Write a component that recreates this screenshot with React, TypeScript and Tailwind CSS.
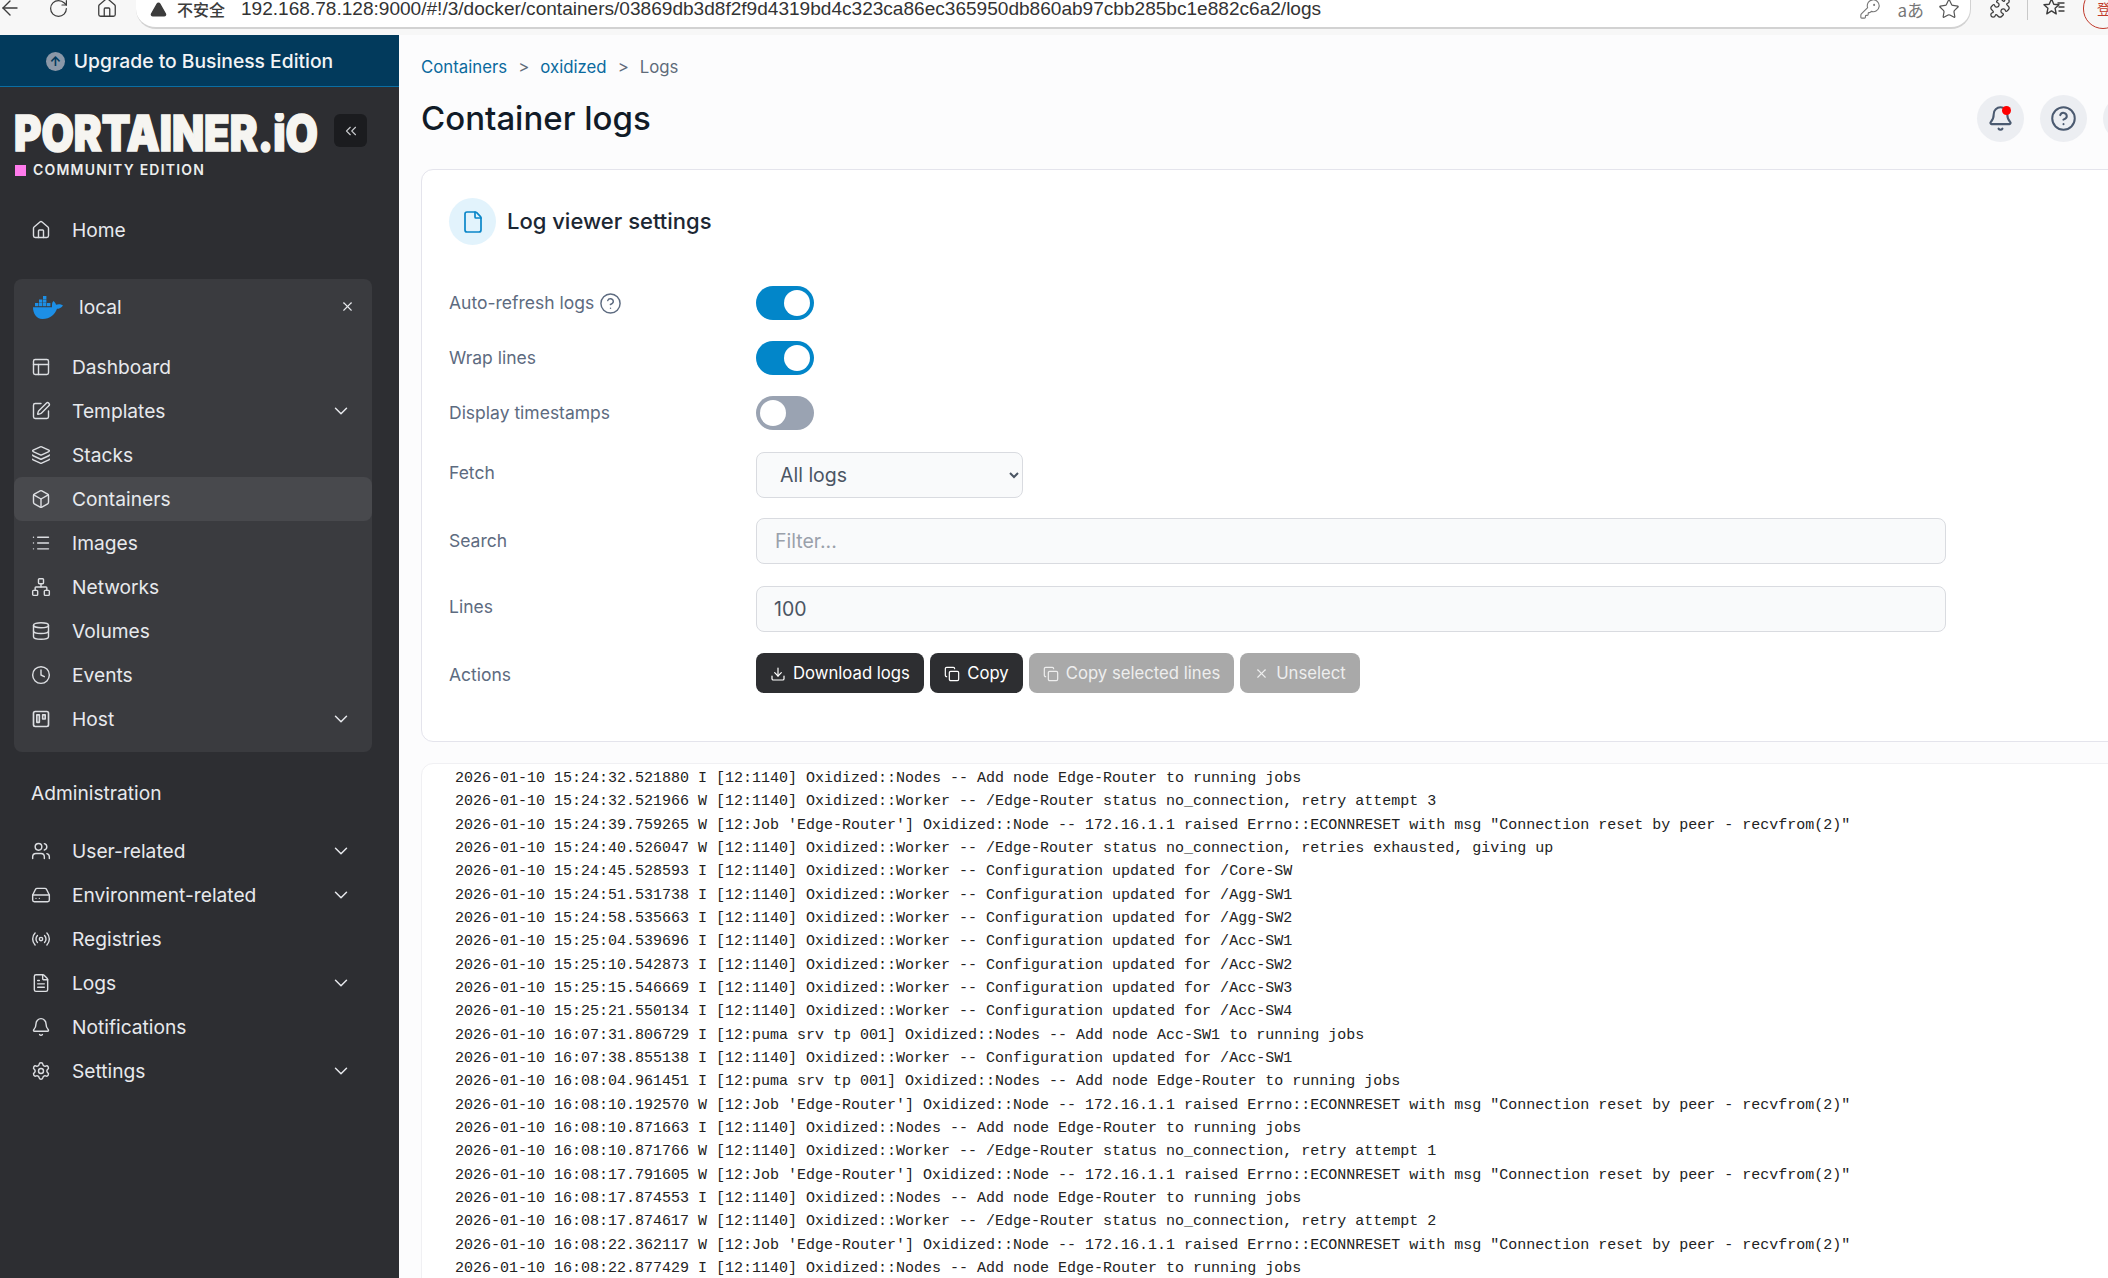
import type { ReactNode } from 'react';
import {
  ArrowLeft, Bell, Box, ChevronDown, ChevronsLeft, CircleHelp, Clock, Copy, Database, Download, File, FileText,
  HardDrive, House, KeyRound, Layers, List, Network, PanelsTopLeft, Puzzle, Radio, RotateCw, Settings, SquarePen,
  Star, TriangleAlert, Users, X,
} from 'lucide-react';

const inter = 'font-[Inter,sans-serif]';

function HostIcon() {
  return (
    <svg width="20" height="20" viewBox="0 0 24 24" fill="none" stroke="currentColor" strokeWidth="2" strokeLinecap="round" strokeLinejoin="round">
      <rect x="3" y="3" width="18" height="18" rx="2" />
      <rect x="7" y="7" width="3" height="9" />
      <rect x="14" y="7" width="3" height="5" />
    </svg>
  );
}

function DockerIcon() {
  return (
    <svg width="30" height="23" viewBox="0 0 30 23" fill="#1d8fe6" className="shrink-0">
      <rect x="2" y="7" width="3.4" height="3.2" />
      <rect x="6" y="7" width="3.4" height="3.2" />
      <rect x="10" y="7" width="3.4" height="3.2" />
      <rect x="14" y="7" width="3.4" height="3.2" />
      <rect x="6" y="3.5" width="3.4" height="3.2" />
      <rect x="10" y="3.5" width="3.4" height="3.2" />
      <rect x="10" y="0" width="3.4" height="3.2" />
      <path d="M0 11.2H19C19 9 18.7 6.5 20.5 5C22 6.2 22.8 7.6 23 8.8C25 7.8 28 8 30 9.5C28.6 12 26 12.8 24 12.8C22 18.5 17 23 9.5 23C3 23 0 17 0 11.2Z" />
    </svg>
  );
}

function FavoritesIcon() {
  return (
    <svg width="24" height="24" viewBox="0 0 24 24" fill="none" stroke="currentColor" strokeWidth="1.4" strokeLinejoin="round" strokeLinecap="round">
      <path d="M9.5 3l2.3 5.2 5.2.5-3.9 3.6 1.1 5.5-4.7-2.9-4.7 2.9 1.1-5.5L2 8.7l5.2-.5z" />
      <path d="M16 7h6M17 11h5M17 15h5" />
    </svg>
  );
}

function NavRow({ icon, label, chevron, active }: { icon: ReactNode; label: string; chevron?: boolean; active?: boolean }) {
  return (
    <div className={`mx-[14px] flex h-11 w-[358px] items-center rounded-lg pl-[17px] text-[#e7e9ed] ${active ? 'bg-[#48494d]' : ''}`}>
      <span className="flex w-5 shrink-0 justify-center text-[#dcdee2]">{icon}</span>
      <span className="ml-[21px] text-[19.2px]">{label}</span>
      {chevron && <ChevronDown size={22} strokeWidth={1.6} className="ml-auto mr-5" />}
    </div>
  );
}

function Sidebar() {
  const i = { size: 20, strokeWidth: 1.7 };
  return (
    <aside className="flex w-[399px] shrink-0 flex-col bg-[#2d2e32]">
      <div className="flex h-[52px] items-center justify-center gap-[9px] border-b border-[#0b6ea3] bg-[#023a5c] pr-[20px] pt-px text-[19.3px] font-medium text-[#f2f4f6]">
        <span className="flex h-[19px] w-[19px] items-center justify-center rounded-full bg-[#8b98a8] text-[13px] font-bold leading-none text-[#023a5c]">↑</span>
        Upgrade to Business Edition
      </div>
      <div className="flex items-start pl-[14px] pt-[26px]">
        <div>
          <svg width="304" height="40" viewBox="0 0 304 40" className="block">
            <text x="0" y="38" textLength="304" lengthAdjust="spacingAndGlyphs" fontFamily="Inter, sans-serif" fontWeight="900" fontSize="50" fill="#f6f5f1" stroke="#f6f5f1" strokeWidth="1.6">
              PORTAINER.iO
            </text>
          </svg>
          <div className="mt-[9px] flex items-center gap-[7px] pl-px">
            <span className="h-[11px] w-[11px] bg-[#ff7bec]" />
            <span className="text-[14px] font-semibold leading-[16px] tracking-[1.2px] text-[#eceded]">COMMUNITY EDITION</span>
          </div>
        </div>
        <div className="ml-[16px] mt-px flex h-[33px] w-[33px] items-center justify-center rounded-md bg-[#1b1c1f] text-[#c8cacd]">
          <ChevronsLeft size={18} strokeWidth={1.5} />
        </div>
      </div>
      <div className="mt-[30px]">
        <NavRow icon={<House {...i} />} label="Home" />
      </div>
      <div className="mx-[14px] mt-[27px] w-[358px] rounded-lg bg-[#3a3b3f] pb-[11px]">
        <div className="flex h-[66px] items-start pl-[19px] pt-[14px] text-[#e7e9ed]">
          <span className="mt-[3px]"><DockerIcon /></span>
          <span className="ml-[16px] text-[19.2px]">local</span>
          <X size={15} strokeWidth={1.8} className="ml-auto mr-[17px] mt-[6px]" />
        </div>
        <div className="-mx-[14px]">
          <NavRow icon={<PanelsTopLeft {...i} />} label="Dashboard" />
          <NavRow icon={<SquarePen {...i} />} label="Templates" chevron />
          <NavRow icon={<Layers {...i} />} label="Stacks" />
          <NavRow icon={<Box {...i} />} label="Containers" active />
          <NavRow icon={<List {...i} />} label="Images" />
          <NavRow icon={<Network {...i} />} label="Networks" />
          <NavRow icon={<Database {...i} />} label="Volumes" />
          <NavRow icon={<Clock {...i} />} label="Events" />
          <NavRow icon={<HostIcon />} label="Host" chevron />
        </div>
      </div>
      <div className="pl-[31px] pt-[28px] text-[19.2px] leading-[26px] text-[#e7e9ed]">Administration</div>
      <div className="mt-[23px]">
        <NavRow icon={<Users {...i} />} label="User-related" chevron />
        <NavRow icon={<HardDrive {...i} />} label="Environment-related" chevron />
        <NavRow icon={<Radio {...i} />} label="Registries" />
        <NavRow icon={<FileText {...i} />} label="Logs" chevron />
        <NavRow icon={<Bell {...i} />} label="Notifications" />
        <NavRow icon={<Settings {...i} />} label="Settings" chevron />
      </div>
    </aside>
  );
}

function BrowserBar() {
  return (
    <div className="h-[35px] shrink-0 overflow-hidden bg-[#f7f7f7]">
      <div className="-mt-[6px] flex h-[35px] items-stretch text-[#3c3c3c]">
        <div className="flex w-[136px] shrink-0 items-center pb-[7px]">
          <ArrowLeft size={24} strokeWidth={1.4} className="-ml-[2px]" />
          <RotateCw size={21} strokeWidth={1.4} className="ml-[26px]" />
          <House size={22} strokeWidth={1.4} className="ml-[27px]" />
        </div>
        <div className="flex w-[1835px] shrink-0 items-center rounded-b-[20px] border-b-2 border-r border-[#d2d2d2] bg-white pb-[3px] pl-[14px] pr-[10px]">
          <TriangleAlert size={17} strokeWidth={2} className="fill-[#3c3c3c] text-[#3c3c3c]" />
          <span className="ml-[10px] font-['Noto_Sans_CJK_SC',sans-serif] text-[16px] font-medium leading-none">不安全</span>
          <span className="ml-[16px] font-['Liberation_Sans',sans-serif] text-[19.07px] leading-none text-[#333]">
            192.168.78.128:9000/#!/3/docker/containers/03869db3d8f2f9d4319bd4c323ca86ec365950db860ab97cbb285bc1e882c6a2/logs
          </span>
          <KeyRound size={22} strokeWidth={1.2} className="ml-auto text-[#777]" />
          <span className="ml-[16px] font-['Noto_Sans_CJK_SC',sans-serif] text-[17px] leading-none text-[#777]">aあ</span>
          <Star size={22} strokeWidth={1.3} className="ml-[14px] text-[#555]" />
        </div>
        <div className="flex flex-1 items-center pb-[7px]">
          <Puzzle size={22} strokeWidth={1.4} className="ml-[18px]" />
          <span className="ml-[16px] h-[24px] w-px bg-[#c9c9c9]" />
          <span className="ml-[14px]"><FavoritesIcon /></span>
          <span className="ml-[17px] h-[41px] w-[40px] shrink-0 rounded-full border border-[#c0392b] pl-[13px] pt-[12px] font-['Noto_Sans_CJK_SC',sans-serif] text-[14px] leading-none text-[#c0392b]">登</span>
        </div>
      </div>
    </div>
  );
}

function Toggle({ on }: { on?: boolean }) {
  return (
    <div className={`flex h-[34px] w-[58px] items-center rounded-full px-[4px] ${on ? 'justify-end bg-[#0286c9]' : 'justify-start bg-[#9aa3b2]'}`}>
      <span className="h-[26px] w-[26px] rounded-full bg-white" />
    </div>
  );
}

function FormRow({ label, children, className }: { label: ReactNode; children: ReactNode; className?: string }) {
  return (
    <div className={`flex items-center ${className ?? ''}`}>
      <div className="w-[307px] shrink-0 text-[17.5px] text-[#5d6b80]">{label}</div>
      {children}
    </div>
  );
}

function ActionButton({ icon, label, disabled, w }: { icon: ReactNode; label: string; disabled?: boolean; w: string }) {
  return (
    <div className={`flex h-10 items-center justify-center gap-[7px] rounded-lg pt-px text-[16.7px] ${w} ${disabled ? 'bg-[#a9a9a9] text-[#eeeeee]' : 'bg-[#2d2e31] text-white'}`}>
      {icon}
      {label}
    </div>
  );
}

const fieldClass = 'h-[46px] rounded-lg border border-[#d9dbe0] bg-[#f9fafb] text-[19.5px] text-[#4b5563] outline-none';

function SettingsCard() {
  return (
    <div className="rounded-t-xl rounded-bl-xl border border-[#e4e4ec] bg-white pb-[48px] pl-[27px] pt-[28px]">
      <div className="flex items-center">
        <span className="flex h-[47px] w-[47px] items-center justify-center rounded-full bg-[#e2f3fc] text-[#0a86c8]">
          <File size={24} strokeWidth={1.7} />
        </span>
        <span className="ml-[11px] text-[22px] font-medium text-[#1c2733]">Log viewer settings</span>
      </div>
      <FormRow className="mt-[41px]" label={<span className="flex items-center gap-[5px]">Auto-refresh logs <CircleHelp size={23} strokeWidth={1.5} /></span>}>
        <Toggle on />
      </FormRow>
      <FormRow className="mt-[21px]" label="Wrap lines"><Toggle on /></FormRow>
      <FormRow className="mt-[21px]" label="Display timestamps"><Toggle /></FormRow>
      <FormRow className="mt-[22px]" label={<span className="relative -top-[2px]">Fetch</span>}>
        <select className={`${fieldClass} w-[267px] pl-[19px] pr-[5px]`} defaultValue="All logs">
          <option>All logs</option>
        </select>
      </FormRow>
      <FormRow className="mt-[20px]" label="Search">
        <input className={`${fieldClass} w-[1190px] px-[18px] placeholder:text-[#9aa1ab]`} placeholder="Filter..." />
      </FormRow>
      <FormRow className="mt-[22px]" label={<span className="relative -top-[2px]">Lines</span>}>
        <input className={`${fieldClass} w-[1190px] px-[17px]`} defaultValue="100" />
      </FormRow>
      <FormRow className="mt-[21px]" label={<span className="relative top-[2px]">Actions</span>}>
        <div className="flex gap-[6px]">
          <ActionButton w="w-[168px]" icon={<Download size={16} strokeWidth={1.8} />} label="Download logs" />
          <ActionButton w="w-[93px]" icon={<Copy size={16} strokeWidth={1.8} />} label="Copy" />
          <ActionButton w="w-[205px]" disabled icon={<Copy size={16} strokeWidth={1.8} />} label="Copy selected lines" />
          <ActionButton w="w-[120px]" disabled icon={<X size={15} strokeWidth={1.8} />} label="Unselect" />
        </div>
      </FormRow>
    </div>
  );
}

const logLines = [
  "2026-01-10 15:24:32.521880 I [12:1140] Oxidized::Nodes -- Add node Edge-Router to running jobs",
  "2026-01-10 15:24:32.521966 W [12:1140] Oxidized::Worker -- /Edge-Router status no_connection, retry attempt 3",
  "2026-01-10 15:24:39.759265 W [12:Job 'Edge-Router'] Oxidized::Node -- 172.16.1.1 raised Errno::ECONNRESET with msg \"Connection reset by peer - recvfrom(2)\"",
  "2026-01-10 15:24:40.526047 W [12:1140] Oxidized::Worker -- /Edge-Router status no_connection, retries exhausted, giving up",
  "2026-01-10 15:24:45.528593 I [12:1140] Oxidized::Worker -- Configuration updated for /Core-SW",
  "2026-01-10 15:24:51.531738 I [12:1140] Oxidized::Worker -- Configuration updated for /Agg-SW1",
  "2026-01-10 15:24:58.535663 I [12:1140] Oxidized::Worker -- Configuration updated for /Agg-SW2",
  "2026-01-10 15:25:04.539696 I [12:1140] Oxidized::Worker -- Configuration updated for /Acc-SW1",
  "2026-01-10 15:25:10.542873 I [12:1140] Oxidized::Worker -- Configuration updated for /Acc-SW2",
  "2026-01-10 15:25:15.546669 I [12:1140] Oxidized::Worker -- Configuration updated for /Acc-SW3",
  "2026-01-10 15:25:21.550134 I [12:1140] Oxidized::Worker -- Configuration updated for /Acc-SW4",
  "2026-01-10 16:07:31.806729 I [12:puma srv tp 001] Oxidized::Nodes -- Add node Acc-SW1 to running jobs",
  "2026-01-10 16:07:38.855138 I [12:1140] Oxidized::Worker -- Configuration updated for /Acc-SW1",
  "2026-01-10 16:08:04.961451 I [12:puma srv tp 001] Oxidized::Nodes -- Add node Edge-Router to running jobs",
  "2026-01-10 16:08:10.192570 W [12:Job 'Edge-Router'] Oxidized::Node -- 172.16.1.1 raised Errno::ECONNRESET with msg \"Connection reset by peer - recvfrom(2)\"",
  "2026-01-10 16:08:10.871663 I [12:1140] Oxidized::Nodes -- Add node Edge-Router to running jobs",
  "2026-01-10 16:08:10.871766 W [12:1140] Oxidized::Worker -- /Edge-Router status no_connection, retry attempt 1",
  "2026-01-10 16:08:17.791605 W [12:Job 'Edge-Router'] Oxidized::Node -- 172.16.1.1 raised Errno::ECONNRESET with msg \"Connection reset by peer - recvfrom(2)\"",
  "2026-01-10 16:08:17.874553 I [12:1140] Oxidized::Nodes -- Add node Edge-Router to running jobs",
  "2026-01-10 16:08:17.874617 W [12:1140] Oxidized::Worker -- /Edge-Router status no_connection, retry attempt 2",
  "2026-01-10 16:08:22.362117 W [12:Job 'Edge-Router'] Oxidized::Node -- 172.16.1.1 raised Errno::ECONNRESET with msg \"Connection reset by peer - recvfrom(2)\"",
  "2026-01-10 16:08:22.877429 I [12:1140] Oxidized::Nodes -- Add node Edge-Router to running jobs",
];

function HeaderButton({ children }: { children: ReactNode }) {
  return <span className="relative flex h-[47px] w-[47px] items-center justify-center rounded-full bg-[#eceef2] text-[#4b5a70]">{children}</span>;
}

export default function App() {
  return (
    <div className={`flex h-[1278px] w-[2108px] flex-col overflow-hidden bg-white ${inter}`}>
      <BrowserBar />
      <div className="flex min-h-0 flex-1">
        <Sidebar />
        <main className="min-w-0 flex-1 overflow-hidden bg-[#fcfcfd]">
          <div className="w-[1751px] pl-[22px]">
            <div className="flex h-[134px] flex-col">
              <div className="flex h-[60px] items-end gap-[11px] pb-[16px] text-[16.8px] leading-[24px] text-[#5f6b7a]">
                <span className="text-[#0b6a9e]">Containers</span>
                <span>&gt;</span>
                <span className="text-[#0b6a9e]">oxidized</span>
                <span>&gt;</span>
                <span>Logs</span>
              </div>
              <div className="flex items-center justify-between">
                <h1 className="text-[33px] font-medium leading-[47px] text-[#111b27]">Container logs</h1>
                <div className="flex gap-4">
                  <HeaderButton>
                    <Bell size={27} strokeWidth={1.8} />
                    <span className="absolute right-[13px] top-[11px] h-[9px] w-[9px] rounded-full bg-[#ff0000]" />
                  </HeaderButton>
                  <HeaderButton><CircleHelp size={27} strokeWidth={1.8} /></HeaderButton>
                  <HeaderButton><span /></HeaderButton>
                </div>
              </div>
            </div>
            <SettingsCard />
            <div className="mt-[21px] rounded-t-xl border border-[#f0f0f3] bg-white pl-[33px] pt-[3px]">
              {logLines.map((line) => (
                <div key={line} className="whitespace-pre font-['Liberation_Mono',monospace] text-[15px] leading-[23.33px] text-[#222222]">
                  {line}
                </div>
              ))}
            </div>
          </div>
        </main>
      </div>
    </div>
  );
}
